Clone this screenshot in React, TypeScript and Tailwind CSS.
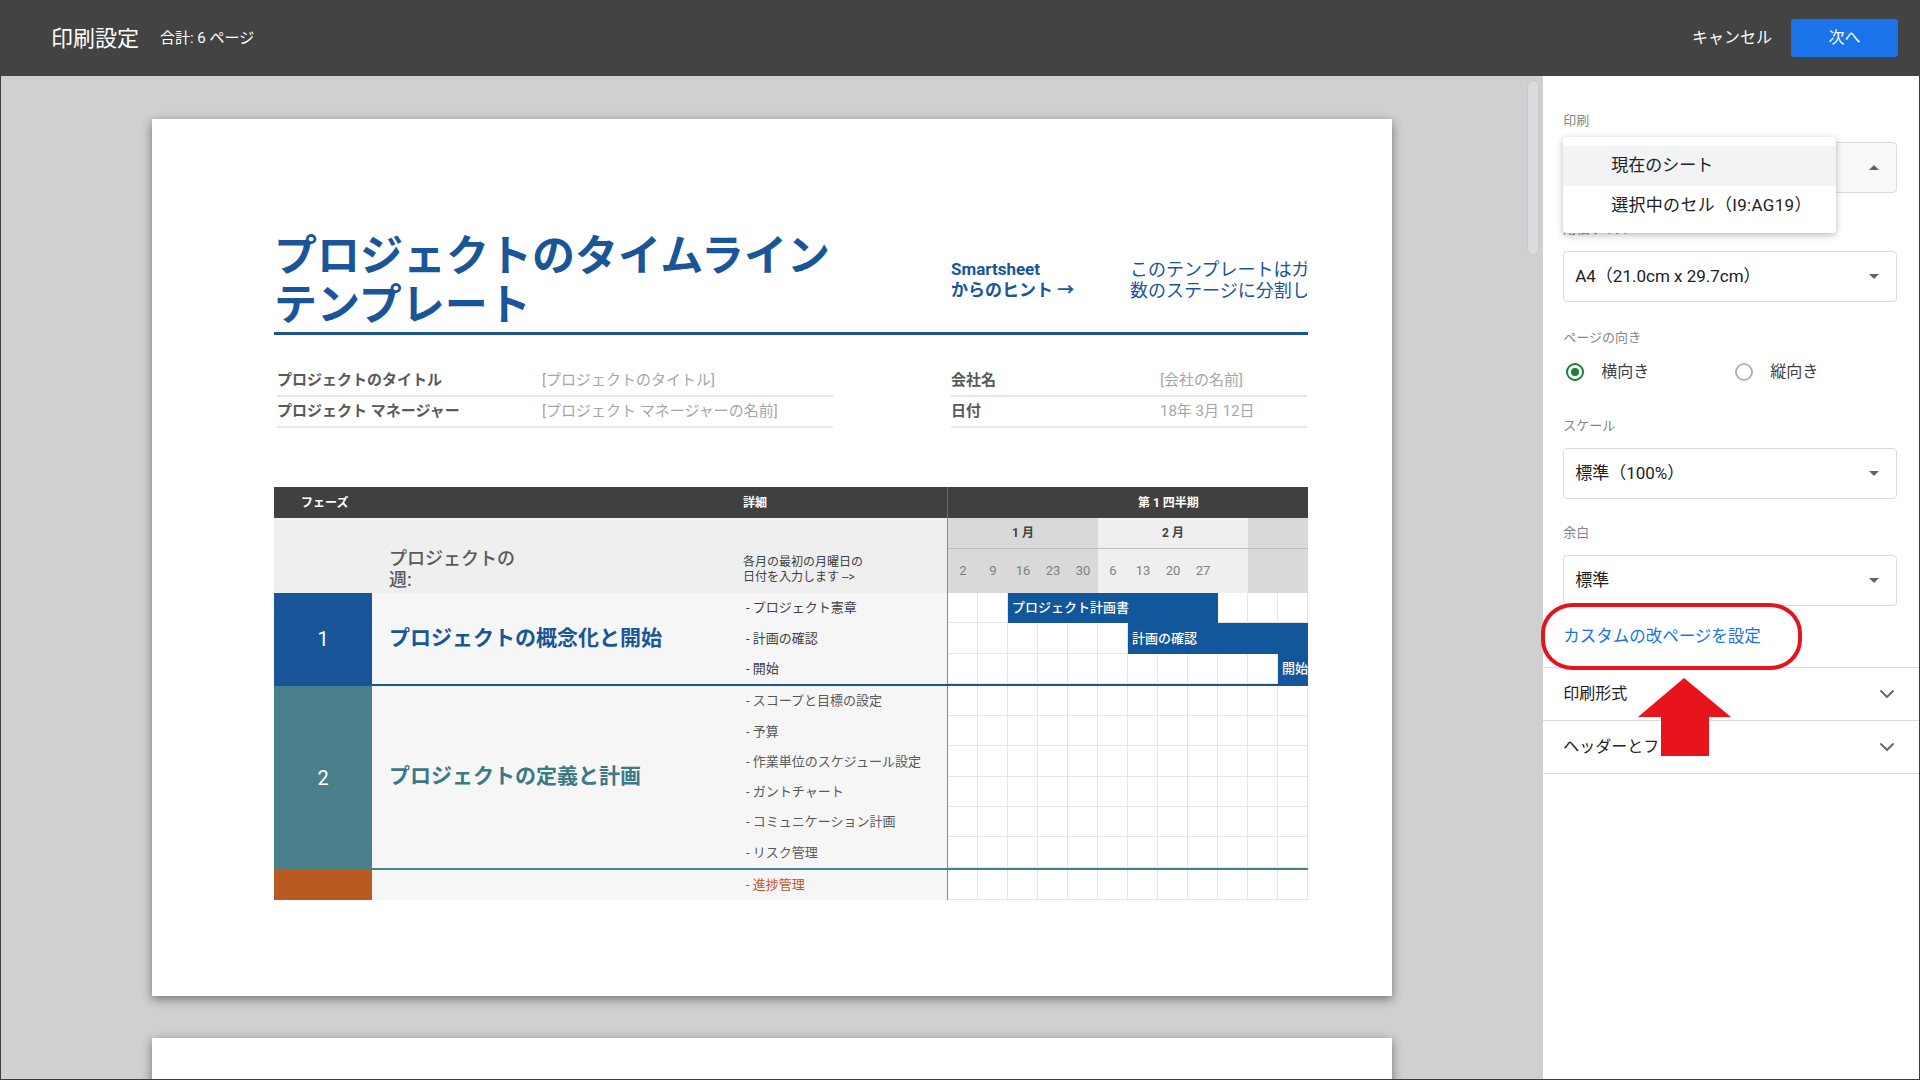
import { ChevronDown } from 'lucide-react'

const FONT = "font-['Roboto','Noto_Sans_CJK_JP',sans-serif]"

type Bar = { row: number; start: number; len: number; label: string }

type PhaseProps = {
  num: string
  title: string
  boxClass: string
  titleClass: string
  itemClass: string
  lineClass: string
  items: string[]
  bars: Bar[]
}

function ChartRow({ bars }: { bars: Bar[] }) {
  return (
    <div className="relative w-[361px] border-l border-[#8a8a8a] grid grid-cols-12 bg-white">
      {Array.from({ length: 12 }).map((_, i) => (
        <div key={i} className="border-r border-b border-[#e6e6e6]"></div>
      ))}
      {bars.map((b) => (
        <div
          key={b.label}
          className="absolute top-0 bottom-0 bg-[#12569b] text-white text-[13px] font-medium flex items-center pl-[4px] overflow-hidden whitespace-nowrap"
          style={{ left: b.start * 30, width: b.len * 30 }}
        >
          {b.label}
        </div>
      ))}
    </div>
  )
}

function Phase({ num, title, boxClass, titleClass, itemClass, lineClass, items, bars }: PhaseProps) {
  return (
    <div className="flex">
      <div className={`w-[98px] flex items-center justify-center text-white text-[20px] ${boxClass}`}>{num}</div>
      <div className={`flex ${lineClass}`}>
        <div className={`w-[371px] bg-[#f6f6f6] flex items-center pl-[17px] text-[21px] font-bold ${titleClass}`}>
          {title}
        </div>
        <div className="flex flex-col">
          {items.map((it, i) => (
            <div key={it} className="flex h-[30.3px]">
              <div className={`w-[204px] bg-[#f6f6f6] flex items-center pl-[3px] text-[13px] ${itemClass}`}>
                {'- ' + it}
              </div>
              <ChartRow bars={bars.filter((b) => b.row === i)} />
            </div>
          ))}
        </div>
      </div>
    </div>
  )
}

function Gantt() {
  return (
    <div className="mt-[59px] w-[1034px]">
      <div className="h-[31px] bg-[#404040] flex items-center text-white text-[12px] font-bold">
        <div className="w-[98px] pl-[27px]">フェーズ</div>
        <div className="w-[371px]"></div>
        <div className="w-[204px]">詳細</div>
        <div className="w-[361px] h-full flex items-center border-l border-[#6b6b6b] pl-[190px]">第 1 四半期</div>
      </div>
      <div className="flex h-[75px]">
        <div className="w-[98px] bg-[#efefef]"></div>
        <div className="w-[371px] bg-[#efefef] pl-[17px] pt-[30px] text-[18px] leading-[21px] font-medium text-[#595959]">
          <div>プロジェクトの</div>
          <div>週:</div>
        </div>
        <div className="w-[204px] bg-[#efefef] pt-[37px] text-[12px] leading-[15px] text-[#404040]">
          <div>各月の最初の月曜日の</div>
          <div>日付を入力します --&gt;</div>
        </div>
        <div className="w-[361px] border-l border-[#8a8a8a] flex flex-col">
          <div className="flex h-[31px] border-b border-[#bdbdbd] text-[12px] font-bold text-[#404040]">
            <div className="w-[150px] bg-[#d9d9d9] flex items-center justify-center">1 月</div>
            <div className="w-[150px] bg-[#efefef] flex items-center justify-center">2 月</div>
            <div className="w-[60px] bg-[#d9d9d9]"></div>
          </div>
          <div className="flex flex-1 text-[13px] text-[#7f7f7f]">
            <div className="w-[150px] bg-[#d9d9d9] grid grid-cols-5">
              {['2', '9', '16', '23', '30'].map((d) => (
                <div key={d} className="flex items-center justify-center">{d}</div>
              ))}
            </div>
            <div className="w-[150px] bg-[#efefef] grid grid-cols-5">
              {['6', '13', '20', '27', ''].map((d, i) => (
                <div key={i} className="flex items-center justify-center">{d}</div>
              ))}
            </div>
            <div className="w-[60px] bg-[#d9d9d9]"></div>
          </div>
        </div>
      </div>
      <Phase
        num="1"
        title="プロジェクトの概念化と開始"
        boxClass="bg-[#1a5599]"
        titleClass="text-[#1a5599]"
        itemClass="text-[#404040]"
        lineClass="border-b-2 border-[#1a5599]"
        items={['プロジェクト憲章', '計画の確認', '開始']}
        bars={[
          { row: 0, start: 2, len: 7, label: 'プロジェクト計画書' },
          { row: 1, start: 6, len: 6, label: '計画の確認' },
          { row: 2, start: 11, len: 1, label: '開始' },
        ]}
      />
      <Phase
        num="2"
        title="プロジェクトの定義と計画"
        boxClass="bg-[#4a7f8c]"
        titleClass="text-[#3d7886]"
        itemClass="text-[#595959]"
        lineClass="border-b-2 border-[#4a7f8c]"
        items={['スコープと目標の設定', '予算', '作業単位のスケジュール設定', 'ガントチャート', 'コミュニケーション計画', 'リスク管理']}
        bars={[]}
      />
      <Phase
        num=""
        title=""
        boxClass="bg-[#b85a22]"
        titleClass="text-[#b85a22]"
        itemClass="text-[#c0561e]"
        lineClass=""
        items={['進捗管理']}
        bars={[]}
      />
    </div>
  )
}

function InfoRow({ label, value, labelW }: { label: string; value: string; labelW: string }) {
  return (
    <div className="h-[31px] flex items-center border-b-2 border-[#e8e8e8] text-[15px]">
      <div className={`${labelW} font-bold text-[#595959]`}>{label}</div>
      <div className="text-[#a6a6a6]">{value}</div>
    </div>
  )
}

function PageOne() {
  return (
    <div className="w-[1240px] h-[877px] shrink-0 bg-white shadow-[0_3px_10px_rgba(0,0,0,0.45)] pl-[122px] pt-[113px]">
      <div className="w-[1034px]">
        <div className="flex items-start">
          <div className="w-[677px] text-[43px] leading-[49px] font-bold text-[#1a5599]">
            <div>プロジェクトのタイムライン</div>
            <div>テンプレート</div>
          </div>
          <div className="mt-[27px] w-[179px] text-[17px] leading-[21px] font-bold text-[#1a5599]">
            <div>Smartsheet</div>
            <div>からのヒント →</div>
          </div>
          <div className="mt-[27px] w-[177px] overflow-hidden whitespace-nowrap text-[18px] leading-[21px] text-[#1a5599]">
            <div>このテンプレートはガ</div>
            <div>数のステージに分割し</div>
          </div>
        </div>
        <div className="mt-[2px] h-[3px] bg-[#1a5599]"></div>
        <div className="mt-[31px] flex justify-between w-[1033px]">
          <div className="w-[559px] pl-[3px]">
            <InfoRow label="プロジェクトのタイトル" value="[プロジェクトのタイトル]" labelW="w-[265px]" />
            <InfoRow label="プロジェクト マネージャー" value="[プロジェクト マネージャーの名前]" labelW="w-[265px]" />
          </div>
          <div className="w-[360px] pl-[4px]">
            <InfoRow label="会社名" value="[会社の名前]" labelW="w-[209px]" />
            <InfoRow label="日付" value="18年 3月 12日" labelW="w-[209px]" />
          </div>
        </div>
        <Gantt />
      </div>
    </div>
  )
}

function Caret({ up }: { up?: boolean }) {
  return up ? (
    <div className="w-0 h-0 border-l-[5px] border-r-[5px] border-b-[5px] border-l-transparent border-r-transparent border-b-[#5f6368]"></div>
  ) : (
    <div className="w-0 h-0 border-l-[5px] border-r-[5px] border-t-[5px] border-l-transparent border-r-transparent border-t-[#5f6368]"></div>
  )
}

function Select({ value, up, className }: { value: string; up?: boolean; className: string }) {
  return (
    <div
      className={`h-[51px] border border-[#dadce0] rounded-[4px] flex items-center justify-between pl-[11px] pr-[17px] text-[17px] text-[#202124] ${className}`}
    >
      <span>{value}</span>
      <Caret up={up} />
    </div>
  )
}

function Label({ text, className }: { text: string; className: string }) {
  return <div className={`text-[13px] leading-[16px] text-[#80868b] ${className}`}>{text}</div>
}

function Panel() {
  return (
    <aside className="relative w-[376px] bg-white flex flex-col">
      <div className="pl-[20px] pr-[22px] pt-[37px]">
        <Label text="印刷" className="" />
        <Select value="" up className="mt-[13px] bg-[#f8f9fa]" />
        <Label text="用紙サイズ" className="mt-[28px]" />
        <Select value="A4（21.0cm x 29.7cm）" className="mt-[14px]" />
        <Label text="ページの向き" className="mt-[28px]" />
        <div className="mt-[16px] h-[20px] flex items-center text-[16px] text-[#3c4043]">
          <div className="w-[172px] pl-[3px] flex items-center">
            <div className="w-[18px] h-[18px] rounded-full border-2 border-[#188038] flex items-center justify-center">
              <div className="w-[8px] h-[8px] rounded-full bg-[#188038]"></div>
            </div>
            <span className="ml-[17px]">横向き</span>
          </div>
          <div className="flex items-center">
            <div className="w-[18px] h-[18px] rounded-full border-2 border-[#b0b4b8]"></div>
            <span className="ml-[17px]">縦向き</span>
          </div>
        </div>
        <Label text="スケール" className="mt-[36px]" />
        <Select value="標準（100%）" className="mt-[14px]" />
        <Label text="余白" className="mt-[26px]" />
        <Select value="標準" className="mt-[14px]" />
        <div className="mt-[20px] text-[16.5px] leading-[22px] text-[#1a73e8]">カスタムの改ページを設定</div>
      </div>
      <div className="mt-[19px] border-t border-[#dadce0]">
        {['印刷形式', 'ヘッダーとフッター'].map((t) => (
          <div key={t} className="h-[53px] border-b border-[#dadce0] flex items-center justify-between pl-[20px] pr-[20px] text-[16px] text-[#202124]">
            <span>{t}</span>
            <ChevronDown size={24} strokeWidth={1.8} color="#5f6368" />
          </div>
        ))}
      </div>

      {/* open dropdown of the 印刷 select */}
      <div className="absolute left-[20px] top-[61px] w-[273px] bg-white rounded-[4px] shadow-[0_2px_7px_rgba(0,0,0,0.28)] pt-[9px] pb-[7px] text-[17px] text-[#202124]">
        <div className="h-[40px] bg-[#f1f3f4] flex items-center pl-[48px]">現在のシート</div>
        <div className="h-[40px] flex items-center pl-[48px] tracking-[0.3px]">選択中のセル（I9:AG19）</div>
      </div>

      {/* red annotation */}
      <div className="absolute left-[-2px] top-[527px] w-[261px] h-[67px] border-[4px] border-[#e3141c] rounded-[32px/30px]"></div>
      <svg className="absolute left-[95px] top-[602px]" width="93" height="78" viewBox="0 0 93 78">
        <polygon points="46,0 93,39 71,39 71,78 23,78 23,39 0,39" fill="#e8141c" />
      </svg>
    </aside>
  )
}

export default function App() {
  return (
    <div className={`w-[1920px] h-[1080px] overflow-hidden flex flex-col ${FONT}`}>
      <header className="h-[76px] shrink-0 bg-[#434343] flex items-center pl-[51px] pr-[22px]">
        <span className="text-[22px] text-white">印刷設定</span>
        <span className="ml-[21px] text-[15px] text-white">合計: 6 ページ</span>
        <div className="ml-auto flex items-center">
          <span className="text-[16px] text-white">キャンセル</span>
          <button className="ml-[19px] w-[107px] h-[38px] bg-[#1a73e8] rounded-[3px] text-white text-[16px]">次へ</button>
        </div>
      </header>
      <div className="flex flex-1 min-h-0 border-l border-r border-b border-[#3c3c3c]">
        <main className="w-[1543px] bg-[#d0d0d0] flex overflow-hidden">
          <div className="flex flex-col pl-[151px] pt-[43px] gap-[42px]">
            <PageOne />
            <div className="w-[1240px] h-[877px] shrink-0 bg-white shadow-[0_3px_10px_rgba(0,0,0,0.45)]"></div>
          </div>
          <div className="flex-1"></div>
          <div className="w-[16px] pt-[4px]">
            <div className="w-[12px] h-[175px] rounded-full bg-[#dcdce0] border border-[#c9c9cc]"></div>
          </div>
        </main>
        <Panel />
      </div>
    </div>
  )
}
